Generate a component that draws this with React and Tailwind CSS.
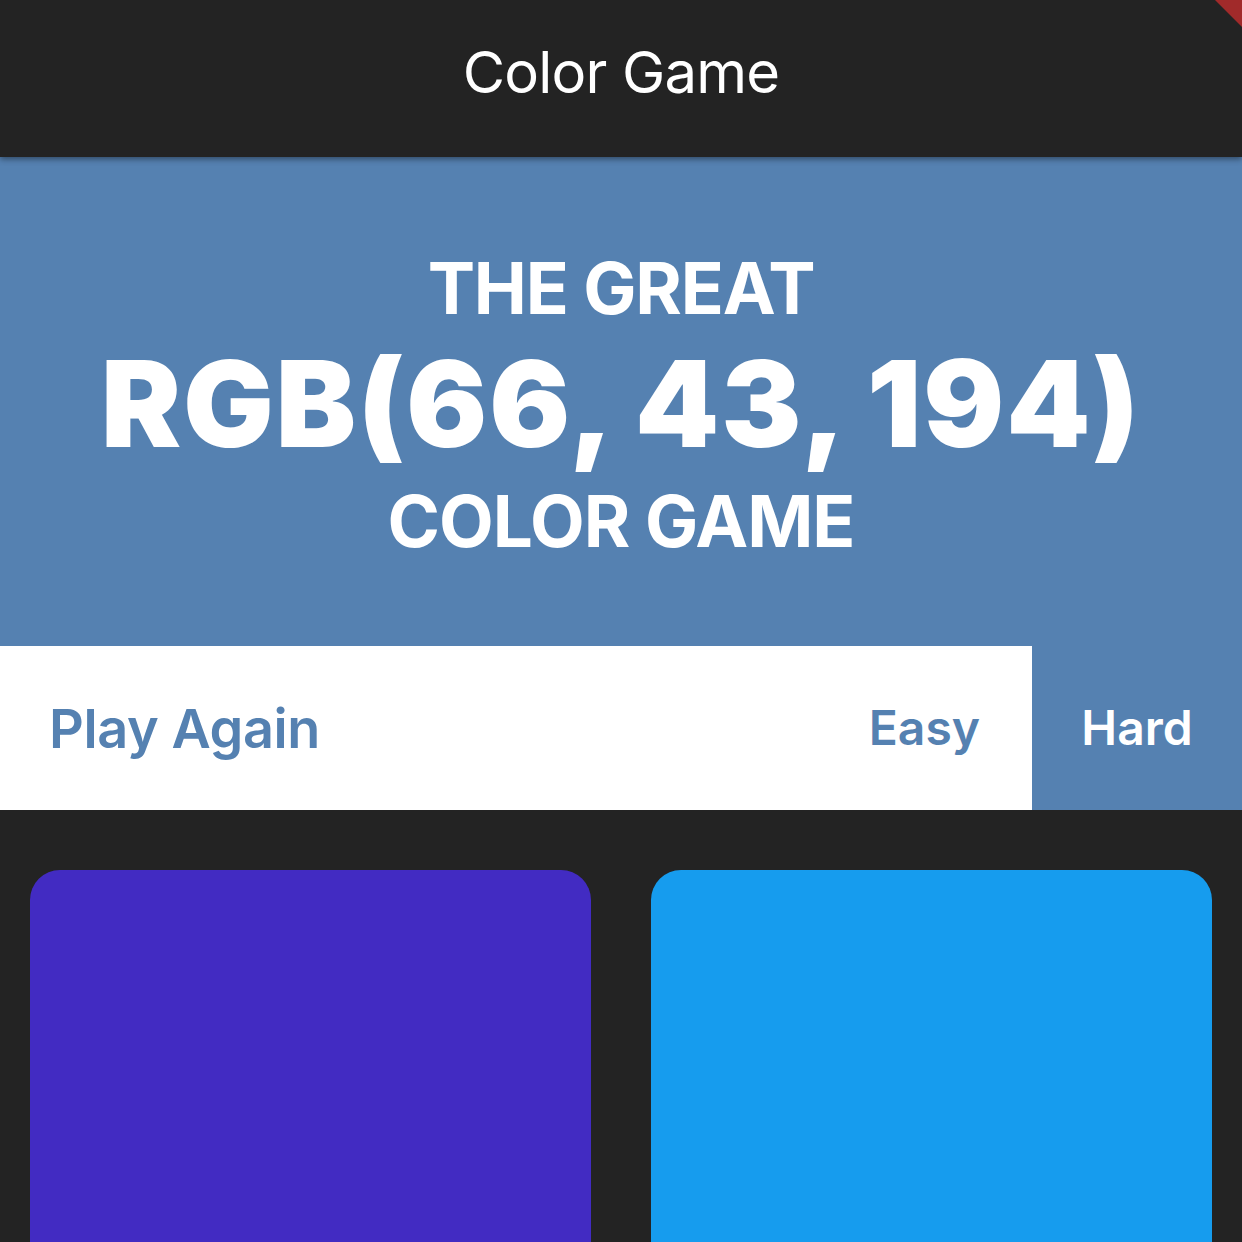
import React, { useState } from "react";

const BLUE = "#5581b1";

const App = () => {
  const [mode, setMode] = useState("hard");
  const [colors] = useState(["rgb(66, 43, 194)", "rgb(22, 156, 238)"]);

  return (
    <div className="relative min-h-[1242px] bg-[#232323] overflow-hidden" style={{ fontFamily: "Inter, 'Noto Sans', sans-serif" }}>
      {/* debug corner */}
      <div className="absolute top-0 right-0 w-[27px] h-[27px] bg-[#a12a2a] z-20 pointer-events-none [clip-path:polygon(0_0,100%_0,100%_100%)]"></div>

      <header className="relative z-10 h-[157px] bg-[#232323] flex items-center justify-center pb-[12px] shadow-[0_2px_6px_rgba(0,0,0,0.45)]">
        <h1 className="text-white text-[58px] font-normal tracking-[-0.8px]">Color Game</h1>
      </header>

      <section className="h-[489px] flex flex-col items-center justify-center text-white" style={{ backgroundColor: BLUE }}>
        <div className="text-[71px] font-bold leading-none tracking-[-1.2px] mt-[6px]">THE GREAT</div>
        <div className="text-[120px] font-black leading-none mt-[20px] tracking-[2px]">RGB(66, 43, 194)</div>
        <div className="text-[71px] font-bold leading-none mt-[22px] tracking-[-1px]">COLOR GAME</div>
      </section>

      <div className="h-[164px] bg-white flex items-stretch">
        <button className="pl-[49px] text-[54px] font-semibold text-[#5581b1] tracking-[-0.4px]">Play Again</button>
        <div className="flex-1"></div>
        <button
          onClick={() => setMode("easy")}
          className={mode === "easy" ? "px-[50px] bg-[#5581b1] text-white text-[48px] font-semibold" : "pr-[52px] text-[#5581b1] text-[48px] font-semibold"}
        >
          Easy
        </button>
        <button
          onClick={() => setMode("hard")}
          className={mode === "hard" ? "w-[210px] bg-[#5581b1] text-white text-[48px] font-semibold" : "w-[210px] text-[#5581b1] text-[48px] font-semibold"}
        >
          Hard
        </button>
      </div>

      <div className="grid grid-cols-2 gap-[60px] px-[30px] pt-[60px]">
        {colors.map((c, i) => (
          <div key={i} className="h-[561px] rounded-[30px]" style={{ backgroundColor: c }}></div>
        ))}
      </div>
    </div>
  );
};

export default App;
